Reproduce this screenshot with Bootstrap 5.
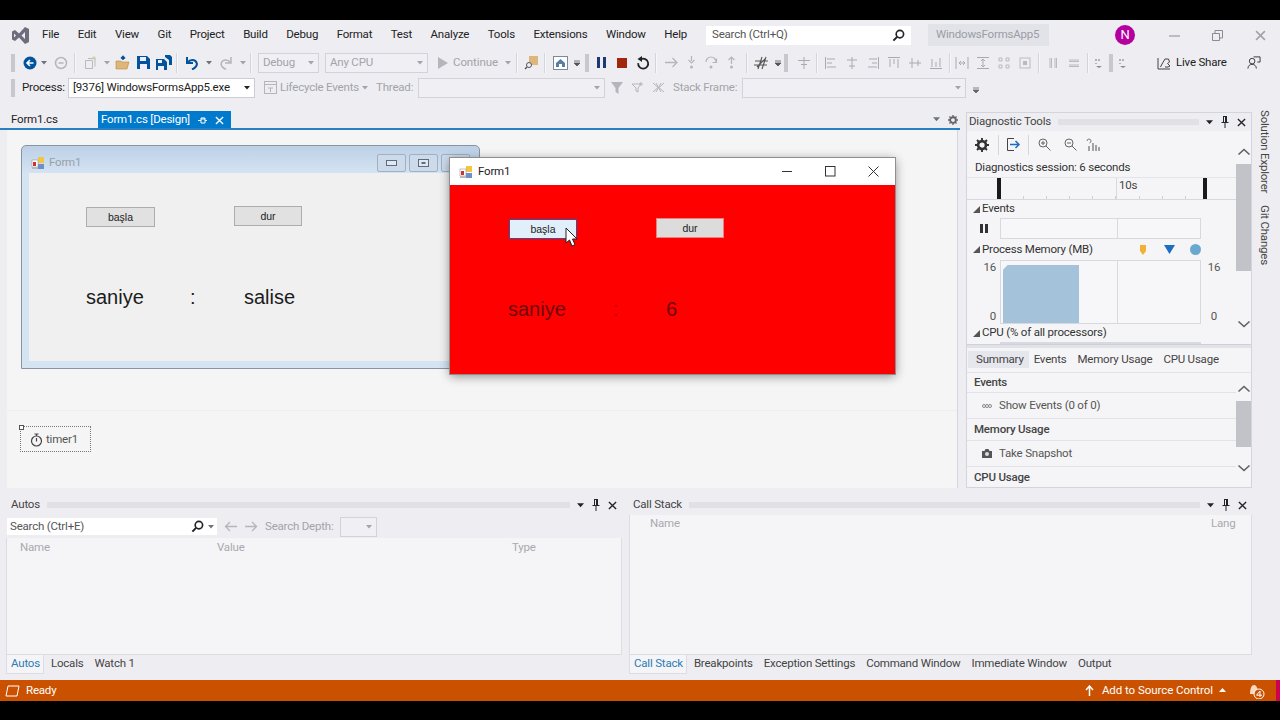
<!DOCTYPE html>
<html lang="en">
<head>
<meta charset="utf-8">
<title>Visual Studio</title>
<link href="https://cdn.jsdelivr.net/npm/bootstrap@5.3.0/dist/css/bootstrap.min.css" rel="stylesheet">
<style>
html,body{height:720px;overflow:hidden;background:#000;margin:0}
body{font:11.5px/1.2 Roboto,"Liberation Sans",sans-serif;letter-spacing:-.2px;color:#222}
.vsapp{margin-top:20px;height:681px;background:#eeeef2;width:1280px}
.ttl{height:30px}.tbar{height:25px}.tbar2{height:25px}
.tbar>*,.tbar2>*,.ttl>*,.rowc>*{flex:none}
.wd-1{width:1px}.wd-2{width:2px}.wd-3{width:3px}.wd-4{width:4px}.wd-5{width:5px}.wd-6{width:6px}.wd-7{width:7px}.wd-8{width:8px}.wd-9{width:9px}.wd-10{width:10px}.wd-11{width:11px}.wd-12{width:12px}.wd-14{width:14px}.wd-16{width:16px}.wd-17{width:17px}.wd-18{width:18px}.wd-20{width:20px}.wd-21{width:21px}.wd-22{width:22px}.wd-24{width:24px}.wd-26{width:26px}.wd-28{width:28px}.wd-30{width:30px}.wd-33{width:33px}.wd-37{width:37px}.wd-43{width:43px}.wd-47{width:47px}.wd-50{width:50px}.wd-66{width:66px}
.ic{display:flex;align-items:center;justify-content:center}
.sepv{width:2px;height:20px;background:linear-gradient(90deg,#d4d5dc 50%,#f7f7f9 50%)}
.grip{width:4px;height:18px;background:radial-gradient(#9a9aa2 .6px,transparent .8px) 0 0/2px 2px}
.menu-row{width:676px;gap:18.5px;padding-left:12px}
.qs{width:205px;height:19px;background:#fff;color:#555;padding:0 5px;border:1px solid #fff}
.prj{width:121px;height:22px;background:#e2e3e9;color:#9c9ca3;padding-left:8px}
.avt{width:20px;height:20px;border-radius:50%;background:#b4009e;color:#fff;font-size:13px}
.combo{height:20px;border:1px solid #d2d3da;color:#a3a3a9;padding:0 4px;background:#f0f0f4}
.c-debug{width:61px}.c-cpu{width:103px}.c-proc{width:187px;background:#fff;color:#222;border-color:#ccced6}.c-thr{width:187px}.c-frm{width:224px}
.c-depth{width:37px;justify-content:flex-end}
.dim{color:#a3a3a9}
.t-life{width:80px}.t-thr{width:38px}.t-frm{width:63px}.t-proc{width:40px}
.cont-w{width:47px;letter-spacing:-.1px}
.upper{height:388px}.docc{width:960px;padding-top:11px}
.doctabs{height:19px;border-bottom:2px solid #2a7fc4}
.dtab1{width:98px;padding:1px 0 0 11px}.dtab2{width:133px;background:#007acc;color:#fff;padding:1px 0 0 3px}
.tabfill{width:727px}
.designer{width:958px;height:358px;position:relative;background:#f5f5f5;border-left:7px solid #eeeef2;border-right:1px solid #d5d6dd}
.traysep{position:absolute;left:0;right:0;top:280px;height:1px;background:#eeeeee}
.dform{position:absolute;left:14px;top:15px;width:459px;height:224px;border:1px solid #8b93a3;border-radius:5px 5px 0 0;background:linear-gradient(#bcd0e6,#d5e4f3 28px,#d5e4f3 100%)}
.dclient{position:absolute;left:7px;top:27px;right:0;bottom:7px;background:#f0f0f0}
.dicon{position:absolute;left:9px;top:10px}
.dname{position:absolute;left:27px;top:10px;color:#9aa0aa}
.cbtn{position:absolute;top:8px;width:29px;height:18px;border:1px solid #9fb0c6;border-radius:2px;background:#ccdaea;display:flex;align-items:center;justify-content:center}
.cb1{left:355px}.cb2{left:387px}.cb3{left:419px}
.wbtn{position:absolute;width:69px;height:20px;font:10.5px/18px "Liberation Sans",sans-serif;letter-spacing:0;text-align:center;border:1px solid #adadad;background:#e1e1e1;color:#222}
.big{position:absolute;font:20px/24px "Liberation Sans",sans-serif;letter-spacing:0;color:#1c1c1c}
.f-b1{left:64px;top:61px}.f-b2{left:212px;top:60px;width:68px}
.f-l1{left:64px;top:139px}.f-l2{left:168px;top:139px}.f-l3{left:222px;top:139px}
.r-b1{left:59px;top:61px;background:#e1effa;border-color:#3c4f9a;width:68px}
.r-b2{left:206px;top:60px;border-color:#f08080;background:#dcdcdc;width:68px}
.r-l1{left:58px;top:139px}.r-l2{left:163px;top:139px}.r-l3{left:216px;top:139px}
.timer{position:absolute;left:13px;top:296px;width:71px;height:26px;border:1px dotted #777;padding:2px 0 0 9px;gap:3px;color:#555}
.thandle{position:absolute;left:-2px;top:-2px;width:5px;height:5px;border:1px solid #555;background:#fff}
.runw{position:absolute;left:443px;top:28px;width:445px;height:216px;background:#f00;box-shadow:0 2px 10px rgba(0,0,0,.45);outline:1px solid #8e8e8e;z-index:2}
.runt{height:27px;background:#fff;color:#222;padding-left:9px}
.runi{margin-right:5px}
.rbtn{width:43px}
.redbig{color:#6e0808}.reddim{color:#c40404}
.cursor{position:absolute;left:115px;top:69px}
.diag{width:286px;border:1px solid #d3d4dc;background:#f5f5f7;margin-top:12px}
.phead{height:18px;gap:7px;padding:0 5px 0 4px;background:#eeeef2;color:#444}
.phead-d{padding-left:2px}
.phead-a{padding-left:5px}
.phead-b{height:20px}
.pgrip{flex:1;height:6px;background:radial-gradient(#d0d0d6 .6px,transparent .8px) 0 0/2px 2px}
.dtop{height:213px}.dleft{width:270px}
.dtoolb{height:27px;background:#f5f5f7}
.session{height:20px;padding-left:8px;border-bottom:1px solid #e4e5ea;color:#333}
.ruler{height:22px;border-bottom:1px solid #d8d9e0}
.rbar{width:4px;height:21px;background:#1a1a1a}
.rcell1{width:116px;height:21px;border-right:1px solid #d8d9e0;background:linear-gradient(90deg,#cfd0d6 1px,transparent 1px) 22px 100%/23px 3px repeat-x}
.rcell2{width:86px;height:21px;padding-left:2px;padding-top:1px;color:#444;background:linear-gradient(90deg,#cfd0d6 1px,transparent 1px) 22px 100%/23px 3px repeat-x}
.sech{padding-left:6px;gap:2px;color:#333}
.hg5{height:5px}.hg6{height:6px}.hg10{height:10px}.hg12{height:12px}.hg14{height:14px}.hg15{height:15px}.hg46{height:46px}
.hg18{height:18px}.hg20{height:20px}.hg21{height:21px}.hg22{height:22px}.hg64{height:64px}
.gfx{width:201px;border:1px solid #d8d9e0;background:#f7f7f9}
.gcell{width:117px;border-right:1px solid #d8d9e0}
.gaxis{color:#555;height:64px;padding:1px 4px 0;justify-content:space-between}
.area{width:76px;height:58px;margin-left:2px;background:#a4c2d9;clip-path:polygon(0 8%,6% 0,100% 0,100% 100%,0 100%)}
.cpuline{width:201px;height:2px;margin-left:33px;background:#d8d9e0}
.scr{width:15px}
.thumb1{width:15px;height:107px;background:#c2c3c9}
.thumb2{width:15px;height:46px;background:#c2c3c9}
.splt{height:4px;background:#e2e3e8;border-top:1px solid #cfd0d8}
.dtabs{height:25px;gap:11px;border-bottom:1px solid #e2e3e8;padding:0 0 1px 1px;color:#444;background:#f5f5f7}
.dt-on{background:#e6e7ed;padding:2px 5px 2px 8px;margin-right:-6px}
.dlow{height:116px}
.lhd{padding-left:7px;color:#444;font-weight:500;border-bottom:1px solid #e2e3e8}
.lrow{padding-left:15px;gap:7px;color:#555;border-bottom:1px solid #e2e3e8;height:26px}
.side{width:28px;padding-left:5px;padding-top:10px;color:#444}
.vert{writing-mode:vertical-rl;white-space:nowrap}
.gitv{margin-top:12px}
.lower{height:192px;padding:7px 0 0 6px}
.pane-a{width:616px}.pane-b{width:623px;margin-left:7px}
.pbody{height:140px;border:1px solid #dcdde3;border-top:0;background:#f5f5f7}
.srow{height:23px;background:#eeeef2;margin:0 -1px}
.sinput{width:210px;height:17px;background:#fff;color:#555;padding:0 3px 0 3px;margin-left:1px}
.cols{height:19px;color:#a9a9af}
.col-n{width:210px;padding-left:13px}.col-v{width:295px}
.cols2{height:18px}
.col-c{flex:1;padding-left:20px}.col-l{padding-right:15px;width:40px;overflow:hidden}
.pad-top{padding-top:4px}
.ptabs{height:18px;gap:11px;color:#444}
.ptab-on{background:#f5f5f7;border:1px solid #dcdde3;border-top:0;color:#2b7cb5;padding:0 3px 0 4px;margin-right:-4px;height:19px}
.status{height:21px;background:#ca5100;color:#fff;padding-left:5px}
.st-r{width:4px;height:21px;background:#d1004e}
.mla{margin-left:auto}
.st-ready{margin-left:6px}
.st-t{margin-left:8px;letter-spacing:-.05px}
.st-car{margin-left:6px}
.st-bell{margin-left:21px;margin-right:11px}
</style>
</head>
<body>
<svg width="0" height="0" class="position-absolute">
<defs>
<symbol id="dd" viewBox="0 0 6 4"><path d="M0 0h6L3 3.5z" fill="currentColor"/></symbol>
<symbol id="formi" viewBox="0 0 14 14"><rect x="7" y="1" width="6" height="6" fill="#f3c63f"/><rect x="1" y="4" width="6" height="7" fill="#fff" stroke="#999" stroke-width=".6"/><rect x="2" y="6" width="3" height="4" fill="#c33"/><rect x="7" y="8" width="6" height="5" fill="#6f8fc9"/><rect x="1" y="11" width="6" height="2" fill="#bbb"/></symbol>
<symbol id="x" viewBox="0 0 10 10"><path d="M1 1l8 8M9 1l-8 8" stroke="currentColor" stroke-width="1.5" fill="none"/></symbol>
<symbol id="pin" viewBox="0 0 10 12"><path d="M3 0v6H1.500v1H4.500v5h1V7h3V6H7V0zM4 1h1v5H4z" fill="currentColor"/></symbol>
<symbol id="mag" viewBox="0 0 14 14"><circle cx="8.500" cy="5.500" r="4" fill="none" stroke="currentColor" stroke-width="1.800"/><path d="M5.500 8.500L1.500 12.500" stroke="currentColor" stroke-width="2.200"/></symbol>
<symbol id="chev" viewBox="0 0 14 8"><path d="M1.500 6.500L7 1.500l5.500 5" fill="none" stroke="#5f5f66" stroke-width="1.600"/></symbol>
<symbol id="chevd" viewBox="0 0 14 8"><path d="M1.500 1.500L7 6.500l5.500-5" fill="none" stroke="#5f5f66" stroke-width="1.600"/></symbol>
<symbol id="tri" viewBox="0 0 7 7"><path d="M0 7L7 0v7z" fill="#555"/></symbol>
<symbol id="al1" viewBox="0 0 14 14"><path d="M1.500 1v12M3 3h8M3 7h5M3 11h9" stroke="#a9a9b0" fill="none"/></symbol>
<symbol id="al2" viewBox="0 0 14 14"><path d="M7 1v12M2 4h10M4 10h6" stroke="#a9a9b0" fill="none"/></symbol>
<symbol id="al3" viewBox="0 0 14 14"><path d="M12.500 1v12M3 3h8M6 7h5M2 11h9" stroke="#a9a9b0" fill="none"/></symbol>
<symbol id="al4" viewBox="0 0 14 14"><path d="M1 1.500h12M3 3v8M7 3v5M11 3v9" stroke="#a9a9b0" fill="none"/></symbol>
<symbol id="al5" viewBox="0 0 14 14"><path d="M1 7h12M4 2v10M10 4v6" stroke="#a9a9b0" fill="none"/></symbol>
<symbol id="al6" viewBox="0 0 14 14"><path d="M1 12.500h12M3 3v8M7 6v5M11 2v9" stroke="#a9a9b0" fill="none"/></symbol>
<symbol id="sp1" viewBox="0 0 14 14"><path d="M1 1v12M13 1v12M4 7h6M4 7l2-2M4 7l2 2M10 7L8 5M10 7L8 9" stroke="#a9a9b0" fill="none"/></symbol>
<symbol id="sp2" viewBox="0 0 14 14"><path d="M1 1.500h12M1 12.500h12M7 3v8M5 5l2-2 2 2M5 9l2 2 2-2" stroke="#a9a9b0" fill="none"/></symbol>
<symbol id="sp3" viewBox="0 0 14 14"><path d="M2 2h3v3H2zM9 2h3v3H9zM2 9h3v3H2zM9 9h3v3H9z" stroke="#b9b9c0" fill="none"/></symbol>
<symbol id="sp4" viewBox="0 0 14 14"><rect x="2" y="2" width="10" height="10" fill="none" stroke="#b9b9c0"/><rect x="5" y="5" width="4" height="4" fill="#b9b9c0"/></symbol>
<symbol id="sp5" viewBox="0 0 14 14"><path d="M4 2v10M5.500 2v10M9 2v10M10.500 2v10" stroke="#b9b9c0" fill="none"/></symbol>
<symbol id="sp6" viewBox="0 0 14 14"><path d="M2 4h10M2 5.500h10M2 9h10M2 10.500h10" stroke="#b9b9c0" fill="none"/></symbol>
<symbol id="dots" viewBox="0 0 8 10"><path d="M1 1v2M4 1v2M1 5v1" stroke="#8a8a92" stroke-width="1.200"/><path d="M1 8h6L4 10z" fill="#8a8a92"/></symbol>
</defs>
</svg>

<div class="vsapp d-flex flex-column">
  <!-- title / menu -->
  <div class="ttl d-flex align-items-center">
    <div class="wd-11"></div>
    <svg width="19" height="19" viewBox="0 0 19 19"><path d="M1 5.500L4 4l4 3.500L14 1l4 2v13l-4 2-6-6.500L4 15l-3-1.500zM3 7.500v4l2-2zM14 6l-3.500 3.500L14 13z" fill="#6d6d7d" fill-rule="evenodd"/></svg>
    <div class="menu-row d-flex align-items-center"><span>File</span><span>Edit</span><span>View</span><span>Git</span><span>Project</span><span>Build</span><span>Debug</span><span>Format</span><span>Test</span><span>Analyze</span><span>Tools</span><span>Extensions</span><span>Window</span><span>Help</span></div>
    <div class="qs d-flex align-items-center justify-content-between"><span>Search (Ctrl+Q)</span><svg width="13" height="13" class="text-dark"><use href="#mag"/></svg></div>
    <div class="wd-17"></div>
    <div class="prj d-flex align-items-center">WindowsFormsApp5</div>
    <div class="wd-66"></div>
    <div class="avt d-flex align-items-center justify-content-center">N</div>
    <div class="wd-18"></div>
    <div class="wd-43 ic"><svg width="11" height="11"><path d="M0 6h11" stroke="#8a8a92"/></svg></div>
    <div class="wd-43 ic"><svg width="11" height="11"><path d="M.5 3.500h7v7h-7zM3 3V.5h7.500V8H8" stroke="#8a8a92" fill="none"/></svg></div>
    <div class="wd-43 ic"><svg width="11" height="11" class="dim"><use href="#x"/></svg></div>
  </div>

  <!-- toolbar 1 -->
  <div class="tbar d-flex align-items-center">
    <div class="wd-11"></div><div class="grip"></div><div class="wd-5"></div>
    <div class="wd-20 ic"><svg width="14" height="14" viewBox="0 0 14 14"><circle cx="7" cy="7" r="6.500" fill="#00539c"/><path d="M10.500 7h-6M7 4L4 7l3 3" stroke="#fff" stroke-width="1.600" fill="none"/></svg></div>
    <div class="wd-8 ic text-secondary"><svg width="6" height="4"><use href="#dd"/></svg></div>
    <div class="wd-26 ic"><svg width="14" height="14" viewBox="0 0 14 14"><circle cx="7" cy="7" r="5.500" fill="none" stroke="#b5b5bb" stroke-width="1.500"/><path d="M4.500 7h5" stroke="#b5b5bb" stroke-width="1.500"/></svg></div>
    <div class="sepv"></div>
    <div class="wd-28 ic"><svg width="14" height="14" viewBox="0 0 14 14"><path d="M2.500 4.500h7v8h-7zM5 2.500h7v8" fill="none" stroke="#b9b9c0"/><path d="M11 0v4M9 2h4" stroke="#d5c99c"/></svg></div>
    <div class="wd-6 ic dim"><svg width="6" height="4"><use href="#dd"/></svg></div>
    <div class="wd-24 ic"><svg width="15" height="15" viewBox="0 0 15 15"><path d="M1 6h5l1 1h7l-2 7H1z" fill="#dcb67a" stroke="#c08a2c" stroke-width=".6"/><path d="M8 5V1.500M6 3.500l2-2 2 2" stroke="#00539c" stroke-width="1.600" fill="none"/></svg></div>
    <div class="wd-18 ic"><svg width="13" height="13" viewBox="0 0 13 13"><path d="M0 0h10l3 3v10H0z" fill="#00539c"/><path d="M3 1h6v4H3zM3 8h7v5H3z" fill="#eef"/></svg></div>
    <div class="wd-24 ic"><svg width="16" height="15" viewBox="0 0 16 15"><path d="M0 4h8l3 3v8H0z" fill="#00539c"/><path d="M2 5h4v3H2zM2 11h6v4H2z" fill="#eef"/><path d="M9 0h5l2 2v8h-3V5L9 2z" fill="#00539c"/></svg></div>
    <div class="sepv"></div>
    <div class="wd-28 ic"><svg width="14" height="14" viewBox="0 0 14 14"><path d="M2 1v6h6" fill="none" stroke="#00539c" stroke-width="2"/><path d="M2.500 6.500C5 3 10 3 11.500 6.500S10 12 7 13.500" fill="none" stroke="#00539c" stroke-width="2"/></svg></div>
    <div class="wd-6 ic text-secondary"><svg width="6" height="4"><use href="#dd"/></svg></div>
    <div class="wd-28 ic"><svg width="14" height="14" viewBox="0 0 14 14"><path d="M12 1v6H6" fill="none" stroke="#b5b5bb" stroke-width="1.500"/><path d="M11.500 6.500C9 3 4 3 2.500 6.500S4 12 7 13.500" fill="none" stroke="#b5b5bb" stroke-width="1.500"/></svg></div>
    <div class="wd-6 ic dim"><svg width="6" height="4"><use href="#dd"/></svg></div>
    <div class="wd-4"></div><div class="sepv"></div><div class="wd-6"></div>
    <div class="combo c-debug d-flex align-items-center justify-content-between"><span>Debug</span><svg width="6" height="4"><use href="#dd"/></svg></div>
    <div class="wd-6"></div>
    <div class="combo c-cpu d-flex align-items-center justify-content-between"><span>Any CPU</span><svg width="6" height="4"><use href="#dd"/></svg></div>
    <div class="wd-10"></div>
    <div class="wd-10 ic"><svg width="10" height="12"><path d="M0 0l10 6-10 6z" fill="#b5b5bb"/></svg></div>
    <div class="wd-5"></div>
    <div class="cont-w dim text-nowrap">Continue</div>
    <div class="wd-16 ic dim"><svg width="6" height="4"><use href="#dd"/></svg></div>
    <div class="sepv"></div>
    <div class="wd-26 ic"><svg width="15" height="15" viewBox="0 0 15 15"><path d="M5 1h9v9H5z" fill="#dcb67a"/><circle cx="5" cy="10" r="2.500" fill="#eef" stroke="#555"/><path d="M3 12l-2 2" stroke="#555" stroke-width="1.500"/></svg></div>
    <div class="sepv"></div>
    <div class="wd-28 ic"><svg width="15" height="14" viewBox="0 0 15 14"><rect x=".5" y=".5" width="14" height="13" fill="#fff" stroke="#7b8a9a"/><path d="M3 7l4.500-4L12 7v4H3z" fill="#5a7ea3"/><rect x="6" y="8" width="3" height="3" fill="#fff"/></svg></div>
    <div class="wd-6 ic"><svg width="6" height="8" viewBox="0 0 6 8"><path d="M0 2h6M0 4h6l-3 3z" stroke="#555" stroke-width=".8" fill="#555"/></svg></div>
    <div class="wd-5"></div><div class="grip"></div><div class="wd-5"></div>
    <div class="wd-14 ic"><svg width="9" height="11"><path d="M0 0h3v11H0zM6 0h3v11H6z" fill="#1b3a73"/></svg></div>
    <div class="wd-28 ic"><svg width="10" height="10"><rect width="10" height="10" fill="#a1260d"/></svg></div>
    <div class="wd-14 ic"><svg width="14" height="14" viewBox="0 0 14 14"><path d="M5 3.200a5 5 0 1 1-2.800 4" fill="none" stroke="#222" stroke-width="1.800"/><path d="M6 0v6L1.500 3z" fill="#222"/></svg></div>
    <div class="wd-5"></div><div class="sepv"></div><div class="wd-4"></div>
    <div class="wd-20 ic"><svg width="13" height="11" viewBox="0 0 13 11"><path d="M0 5.500h12M7.500 1L12 5.500 7.500 10" stroke="#b5b5bb" stroke-width="1.300" fill="none"/></svg></div>
    <div class="wd-20 ic"><svg width="9" height="13" viewBox="0 0 9 13"><path d="M4.500 0v5M1.500 4L4.500 7l3-3" stroke="#b5b5bb" stroke-width="1.200" fill="none"/><circle cx="4.500" cy="11" r="1.500" fill="#b5b5bb"/></svg></div>
    <div class="wd-20 ic"><svg width="13" height="13" viewBox="0 0 13 13"><path d="M1 6a5 5 0 0 1 10 0M11.500 2.500V6.500H7.500" stroke="#b5b5bb" stroke-width="1.200" fill="none"/><circle cx="6" cy="11" r="1.500" fill="#b5b5bb"/></svg></div>
    <div class="wd-20 ic"><svg width="9" height="13" viewBox="0 0 9 13"><path d="M4.500 8V1M1.500 4l3-3 3 3" stroke="#b5b5bb" stroke-width="1.200" fill="none"/><circle cx="4.500" cy="11" r="1.500" fill="#b5b5bb"/></svg></div>
    <div class="wd-5"></div><div class="sepv"></div>
    <div class="wd-26 ic"><svg width="16" height="16" viewBox="0 0 16 16"><path d="M5 14L9 2M9 14L13 2M2 6h13M1 10h13M4 12L12 4" stroke="#555" stroke-width="1.100" fill="none"/></svg></div>
    <div class="wd-8 ic"><svg width="6" height="8" viewBox="0 0 6 8"><path d="M0 2h6M0 4h6l-3 3z" stroke="#555" stroke-width=".8" fill="#555"/></svg></div>
    <div class="wd-2"></div><div class="grip"></div><div class="wd-4"></div>
    <div class="wd-24 ic"><svg width="14" height="14" viewBox="0 0 14 14"><path d="M1 4.500h12M7 1v12M4 8.500h6" stroke="#a9a9b0" fill="none"/></svg></div>
    <div class="sepv"></div>
    <div class="wd-2"></div>
    <div class="wd-21 ic"><svg width="14" height="14"><use href="#al1"/></svg></div>
    <div class="wd-21 ic"><svg width="14" height="14"><use href="#al2"/></svg></div>
    <div class="wd-21 ic"><svg width="14" height="14"><use href="#al3"/></svg></div>
    <div class="wd-21 ic"><svg width="14" height="14"><use href="#al4"/></svg></div>
    <div class="wd-21 ic"><svg width="14" height="14"><use href="#al5"/></svg></div>
    <div class="wd-21 ic"><svg width="14" height="14"><use href="#al6"/></svg></div>
    <div class="wd-3"></div><div class="sepv"></div>
    <div class="wd-21 ic"><svg width="14" height="14"><use href="#sp1"/></svg></div>
    <div class="wd-21 ic"><svg width="14" height="14"><use href="#sp2"/></svg></div>
    <div class="wd-21 ic"><svg width="14" height="14"><use href="#sp3"/></svg></div>
    <div class="wd-21 ic"><svg width="14" height="14"><use href="#sp4"/></svg></div>
    <div class="wd-3"></div><div class="sepv"></div><div class="wd-2"></div>
    <div class="wd-21 ic"><svg width="14" height="14"><use href="#sp5"/></svg></div>
    <div class="wd-21 ic"><svg width="14" height="14"><use href="#sp6"/></svg></div>
    <div class="wd-3"></div><div class="sepv"></div>
    <div class="wd-20 ic"><svg width="8" height="10"><use href="#dots"/></svg></div>
    <div class="grip wd-2"></div>
    <div class="wd-20 ic"><svg width="8" height="10"><use href="#dots"/></svg></div>
    <div class="wd-24"></div>
    <div class="wd-14 ic"><svg width="14" height="14" viewBox="0 0 14 14"><path d="M1 2v11h12" fill="none" stroke="#444" stroke-width="1"/><path d="M3.500 11L5 8l3-5h3.500l1 3-2 1.500L13 10l-2 1H8" fill="none" stroke="#444"/></svg></div>
    <div class="wd-5"></div>
    <div class="wd-50 text-nowrap">Live Share</div>
    <div class="wd-21"></div>
    <div class="wd-14 ic"><svg width="15" height="15" viewBox="0 0 15 15"><circle cx="5.500" cy="6" r="3" fill="none" stroke="#333"/><path d="M1 14c0-3 2-4.500 4.500-4.500S10 11 10 14M7 1.500h7V7h-3" fill="none" stroke="#333"/></svg></div>
  </div>

  <!-- toolbar 2 -->
  <div class="tbar2 d-flex align-items-center">
    <div class="wd-11"></div><div class="grip"></div><div class="wd-7"></div>
    <div class="t-proc text-nowrap">Process:</div>
    <div class="wd-6"></div>
    <div class="combo c-proc d-flex align-items-center justify-content-between"><span class="text-nowrap">[9376] WindowsFormsApp5.exe</span><svg width="6" height="4"><use href="#dd"/></svg></div>
    <div class="wd-8"></div>
    <div class="wd-14 ic"><svg width="13" height="13" viewBox="0 0 13 13"><rect x=".5" y=".5" width="12" height="12" fill="none" stroke="#b5b5bb"/><path d="M.5 3.500h12M4 7h5M6.500 7v4" stroke="#b5b5bb"/></svg></div>
    <div class="wd-3"></div>
    <div class="t-life dim text-nowrap">Lifecycle Events</div>
    <div class="wd-2"></div><div class="wd-6 ic dim"><svg width="6" height="4"><use href="#dd"/></svg></div><div class="wd-8"></div>
    <div class="t-thr dim text-nowrap">Thread:</div>
    <div class="wd-4"></div>
    <div class="combo c-thr d-flex align-items-center justify-content-end"><svg width="6" height="4"><use href="#dd"/></svg></div>
    <div class="wd-24 ic"><svg width="12" height="12" viewBox="0 0 12 12"><path d="M0 0h12L7.500 6v6l-3-2V6z" fill="#b5b5bb"/></svg></div>
    <div class="wd-18 ic"><svg width="12" height="12" viewBox="0 0 12 12"><path d="M0 2h9L6 6v4L4 9V6zM9 0v4M7 2h4" fill="none" stroke="#b5b5bb"/></svg></div>
    <div class="wd-2"></div>
    <div class="wd-18 ic"><svg width="13" height="11" viewBox="0 0 13 11"><path d="M1 1l5 4.500L1 10M12 1L7 5.500l5 4.500M4 1l5 9M9 1L4 10" stroke="#b5b5bb" fill="none"/></svg></div>
    <div class="wd-6"></div>
    <div class="t-frm dim text-nowrap">Stack Frame:</div>
    <div class="wd-6"></div>
    <div class="combo c-frm d-flex align-items-center justify-content-end"><svg width="6" height="4"><use href="#dd"/></svg></div>
    <div class="wd-7"></div>
    <div class="pad-top"><svg width="6" height="8" viewBox="0 0 6 8"><path d="M0 2h6M0 4h6l-3 3z" stroke="#666" stroke-width=".8" fill="#666"/></svg></div>
  </div>

  <!-- document + diagnostics -->
  <div class="upper d-flex">
    <div class="docc flex-none">
      <div class="doctabs d-flex">
        <div class="dtab1 d-flex align-items-center">Form1.cs</div>
        <div class="dtab2 d-flex align-items-center"><span class="text-nowrap">Form1.cs [Design]</span>
          <svg width="9" height="9" viewBox="0 0 9 9" class="ms-2"><path d="M0 4.500h3M3 2v5h4V2zM3 3h4M7 4.500h2" stroke="#fff" fill="none"/></svg>
          <svg width="9" height="9" class="ms-2"><use href="#x"/></svg></div>
        <div class="tabfill d-flex align-items-center justify-content-end gap-2">
          <svg width="7" height="5" class="text-secondary"><use href="#dd"/></svg>
          <svg width="10" height="10" viewBox="0 0 16 16"><circle cx="8" cy="8" r="4.500" fill="none" stroke="#666" stroke-width="3"/><path d="M8 0v3M8 13v3M0 8h3M13 8h3M2.300 2.300l2 2M11.700 11.700l2 2M13.700 2.300l-2 2M4.300 11.700l-2 2" stroke="#666" stroke-width="2.200"/></svg>
        </div>
      </div>
      <div class="designer">
        <div class="dform">
          <svg class="dicon" width="14" height="14"><use href="#formi"/></svg>
          <span class="dname">Form1</span>
          <div class="cbtn cb1"><svg width="11" height="6"><rect x=".5" y=".5" width="10" height="5" fill="#dfe8f2" stroke="#5d6b7d"/></svg></div>
          <div class="cbtn cb2"><svg width="11" height="8"><rect x=".5" y=".5" width="10" height="7" fill="#dfe8f2" stroke="#5d6b7d"/><rect x="3.500" y="3" width="4" height="2" fill="#5d6b7d"/></svg></div>
          <div class="cbtn cb3"></div>
          <div class="dclient"></div>
          <div class="wbtn f-b1">başla</div>
          <div class="wbtn f-b2">dur</div>
          <div class="big f-l1">saniye</div>
          <div class="big f-l2">:</div>
          <div class="big f-l3">salise</div>
        </div>
        <div class="traysep"></div>
        <div class="timer d-flex align-items-center">
          <span class="thandle"></span>
          <svg width="13" height="14" viewBox="0 0 13 14"><circle cx="6.500" cy="8" r="5" fill="none" stroke="#444" stroke-width="1.200"/><path d="M6.500 5v3.500M4.500 1h4M6.500 1v2" stroke="#444" stroke-width="1.200"/></svg>
          <span>timer1</span>
        </div>
        <div class="runw">
          <div class="runt d-flex align-items-center">
            <svg width="14" height="14" class="runi"><use href="#formi"/></svg>
            <span class="flex-grow-1">Form1</span>
            <div class="rbtn ic"><svg width="11" height="11"><path d="M0 5.500h10" stroke="#333"/></svg></div>
            <div class="rbtn ic"><svg width="11" height="11"><rect x=".5" y=".5" width="9.500" height="9.500" fill="none" stroke="#333"/></svg></div>
            <div class="rbtn ic"><svg width="11" height="11"><path d="M.5.500l10 10M10.500.500l-10 10" stroke="#333"/></svg></div>
          </div>
          <div class="wbtn r-b1">başla</div>
          <div class="wbtn r-b2">dur</div>
          <div class="big redbig r-l1">saniye</div>
          <div class="big reddim r-l2">:</div>
          <div class="big redbig r-l3">6</div>
          <svg class="cursor" width="13" height="20" viewBox="0 0 13 20"><path d="M1 1v15l3.500-3 2.500 6 3-1.300L7.500 12H12z" fill="#fff" stroke="#222" stroke-width="1"/></svg>
        </div>
      </div>
    </div>
    <div class="wd-6"></div>
    <div class="diag">
      <div class="phead phead-d d-flex align-items-center"><span>Diagnostic Tools</span><span class="pgrip"></span>
        <svg width="7" height="5" class="text-dark"><use href="#dd"/></svg><svg width="10" height="12" class="text-dark"><use href="#pin"/></svg><svg width="9" height="9" class="text-dark"><use href="#x"/></svg></div>
      <div class="dtop d-flex">
        <div class="dleft">
          <div class="dtoolb d-flex align-items-center rowc">
            <div class="wd-30 ic"><svg width="14" height="14" viewBox="0 0 16 16"><circle cx="8" cy="8" r="4.500" fill="none" stroke="#333" stroke-width="3"/><path d="M8 0v3M8 13v3M0 8h3M13 8h3M2.300 2.300l2 2M11.700 11.700l2 2M13.700 2.300l-2 2M4.300 11.700l-2 2" stroke="#333" stroke-width="2.200"/></svg></div>
            <div class="wd-1"></div>
            <div class="sepv"></div>
            <div class="wd-28 ic"><svg width="14" height="13" viewBox="0 0 14 13"><path d="M7 .5H.5v12H7" fill="none" stroke="#444"/><path d="M3 6.500h9M8.500 3l3.500 3.500L8.500 10" stroke="#1b6ec2" stroke-width="1.500" fill="none"/></svg></div>
            <div class="sepv"></div>
            <div class="wd-28 ic"><svg width="13" height="13" viewBox="0 0 13 13"><circle cx="5" cy="5" r="4" fill="none" stroke="#666"/><path d="M8 8l4.500 4.500M3 5h4M5 3v4" stroke="#666"/></svg></div>
            <div class="wd-24 ic"><svg width="13" height="13" viewBox="0 0 13 13"><circle cx="5" cy="5" r="4" fill="none" stroke="#666"/><path d="M8 8l4.500 4.500M3 5h4" stroke="#666"/></svg></div>
            <div class="wd-22 ic"><svg width="14" height="14" viewBox="0 0 14 14"><path d="M3 13V8M7 13V5M10 13V7M13 13V9" stroke="#777" fill="none" stroke-width="1.300"/><path d="M1 3a2 2 0 1 1 2.500 2" stroke="#777" fill="none"/></svg></div>
          </div>
          <div class="session d-flex align-items-center">Diagnostics session: 6 seconds</div>
          <div class="ruler d-flex rowc">
            <div class="wd-30"></div><div class="rbar"></div><div class="rcell1"></div><div class="rcell2">10s</div><div class="rbar"></div>
          </div>
          <div class="sech hg18 d-flex align-items-center"><svg width="7" height="7"><use href="#tri"/></svg><span>Events</span></div>
          <div class="d-flex hg21 rowc">
            <div class="wd-33 ic"><svg width="8" height="9"><path d="M0 0h3v9H0zM5 0h3v9H5z" fill="#333"/></svg></div>
            <div class="gfx d-flex"><div class="gcell"></div></div>
          </div>
          <div class="sech hg21 d-flex align-items-center"><svg width="7" height="7"><use href="#tri"/></svg><span class="flex-grow-1">Process Memory (MB)</span>
            <svg width="6" height="10" viewBox="0 0 6 10"><path d="M0 0h6v6L3 10 0 6z" fill="#f2b134"/></svg><div class="wd-14"></div>
            <svg width="11" height="9"><path d="M0 0h11L5.500 9z" fill="#1b6ec2"/></svg><div class="wd-11"></div>
            <svg width="11" height="11"><circle cx="5.500" cy="5.500" r="5.500" fill="#6aa9cf"/></svg><div class="wd-33"></div>
          </div>
          <div class="d-flex hg64 rowc">
            <div class="wd-33 gaxis d-flex flex-column align-items-end"><span>16</span><span>0</span></div>
            <div class="gfx d-flex"><div class="gcell d-flex align-items-end"><div class="area"></div></div></div>
            <div class="wd-30 gaxis d-flex flex-column align-items-center pe-2"><span>16</span><span>0</span></div>
          </div>
          <div class="sech hg18 d-flex align-items-center"><svg width="7" height="7"><use href="#tri"/></svg><span>CPU (% of all processors)</span></div>
          <div class="cpuline"></div>
        </div>
        <div class="scr d-flex flex-column align-items-center">
          <div class="hg14"></div>
          <div class="hg14 ic"><svg width="14" height="8"><use href="#chev"/></svg></div>
          <div class="hg5"></div>
          <div class="thumb1"></div>
          <div class="hg46"></div>
          <div class="hg14 ic"><svg width="14" height="8"><use href="#chevd"/></svg></div>
        </div>
      </div>
      <div class="splt"></div>
      <div class="dtabs d-flex align-items-center"><span class="dt-on">Summary</span><span>Events</span><span>Memory Usage</span><span>CPU Usage</span></div>
      <div class="dlow d-flex">
        <div class="dleft">
          <div class="lhd hg20 d-flex align-items-center">Events</div>
          <div class="lrow d-flex align-items-center"><svg width="10" height="6" viewBox="0 0 10 6"><circle cx="2" cy="3" r="1.500" fill="none" stroke="#888"/><circle cx="5" cy="3" r="1.500" fill="none" stroke="#888"/><circle cx="8" cy="3" r="1.500" fill="none" stroke="#888"/></svg><span>Show Events (0 of 0)</span></div>
          <div class="lhd hg22 d-flex align-items-center">Memory Usage</div>
          <div class="lrow d-flex align-items-center"><svg width="10" height="9" viewBox="0 0 10 9"><path d="M0 2h2.500l1-2h3l1 2H10v7H0z" fill="#555"/><circle cx="5" cy="5" r="2" fill="#ddd"/></svg><span>Take Snapshot</span></div>
          <div class="lhd hg22 d-flex align-items-center border-0">CPU Usage</div>
        </div>
        <div class="scr d-flex flex-column align-items-center">
          <div class="hg10"></div>
          <div class="hg12 ic"><svg width="14" height="8"><use href="#chev"/></svg></div>
          <div class="hg6"></div>
          <div class="thumb2"></div>
          <div class="hg15"></div>
          <div class="hg12 ic"><svg width="14" height="8"><use href="#chevd"/></svg></div>
        </div>
      </div>
    </div>
    <div class="side">
      <div class="vert">Solution Explorer</div>
      <div class="vert gitv">Git Changes</div>
    </div>
  </div>

  <!-- lower panes -->
  <div class="lower d-flex">
    <div class="pane-a">
      <div class="phead phead-a phead-b d-flex align-items-center"><span>Autos</span><span class="pgrip"></span>
        <svg width="7" height="5" class="text-dark"><use href="#dd"/></svg><svg width="10" height="12" class="text-dark"><use href="#pin"/></svg><svg width="9" height="9" class="text-dark"><use href="#x"/></svg></div>
      <div class="pbody">
        <div class="srow d-flex align-items-center rowc">
          <div class="sinput d-flex align-items-center justify-content-between"><span>Search (Ctrl+E)</span><span class="d-flex align-items-center gap-1"><svg width="13" height="13" class="text-dark"><use href="#mag"/></svg><svg width="6" height="4" class="text-secondary"><use href="#dd"/></svg></span></div>
          <div class="wd-7"></div>
          <div class="wd-14 ic"><svg width="14" height="11" viewBox="0 0 14 11"><path d="M13 5.500H1M6 1L1.500 5.500 6 10" stroke="#b5b5bb" stroke-width="1.300" fill="none"/></svg></div>
          <div class="wd-6"></div>
          <div class="wd-14 ic"><svg width="14" height="11" viewBox="0 0 14 11"><path d="M1 5.500h12M8 1l4.500 4.500L8 10" stroke="#b5b5bb" stroke-width="1.300" fill="none"/></svg></div>
          <div class="wd-7"></div>
          <span class="dim text-nowrap">Search Depth:</span>
          <div class="wd-6"></div>
          <div class="combo c-depth d-flex align-items-center"><svg width="6" height="4" class="dim"><use href="#dd"/></svg></div>
        </div>
        <div class="cols d-flex align-items-center"><div class="col-n">Name</div><div class="col-v">Value</div><div>Type</div></div>
      </div>
      <div class="ptabs d-flex align-items-center"><span class="ptab-on d-flex align-items-center">Autos</span><span>Locals</span><span>Watch 1</span></div>
    </div>
    <div class="pane-b">
      <div class="phead phead-b d-flex align-items-center"><span>Call Stack</span><span class="pgrip"></span>
        <svg width="7" height="5" class="text-dark"><use href="#dd"/></svg><svg width="10" height="12" class="text-dark"><use href="#pin"/></svg><svg width="9" height="9" class="text-dark"><use href="#x"/></svg></div>
      <div class="pbody">
        <div class="cols cols2 d-flex align-items-center"><div class="col-c">Name</div><div class="col-l">Lang</div></div>
      </div>
      <div class="ptabs d-flex align-items-center"><span class="ptab-on d-flex align-items-center">Call Stack</span><span>Breakpoints</span><span>Exception Settings</span><span>Command Window</span><span>Immediate Window</span><span>Output</span></div>
    </div>
  </div>

  <!-- status -->
  <div class="status d-flex align-items-center">
    <svg width="15" height="12" viewBox="0 0 15 12"><path d="M3 1h11l-2 10H1z" fill="none" stroke="#fff"/></svg>
    <span class="st-ready">Ready</span>
    <div class="mla d-flex align-items-center">
      <svg width="9" height="11" viewBox="0 0 9 11"><path d="M4.500 11V2M1 5l3.500-4L8 5" fill="none" stroke="#fff" stroke-width="1.500"/></svg>
      <span class="st-t text-nowrap">Add to Source Control</span>
      <svg width="7" height="5" class="st-car"><path d="M0 4h7L3.500 0z" fill="#fff"/></svg>
      <svg width="18" height="16" viewBox="0 0 18 16" class="st-bell"><path d="M3 11c0-4 1-9 4-9s4 5 4 9z" fill="#f7d9c4"/><circle cx="12" cy="11" r="5" fill="#ca5100" stroke="#fff"/><path d="M13 8v6M13 8l-3.500 4.200h5.500" stroke="#fff" fill="none"/></svg>
    </div>
    <div class="st-r"></div>
  </div>
</div>
</body>
</html>
